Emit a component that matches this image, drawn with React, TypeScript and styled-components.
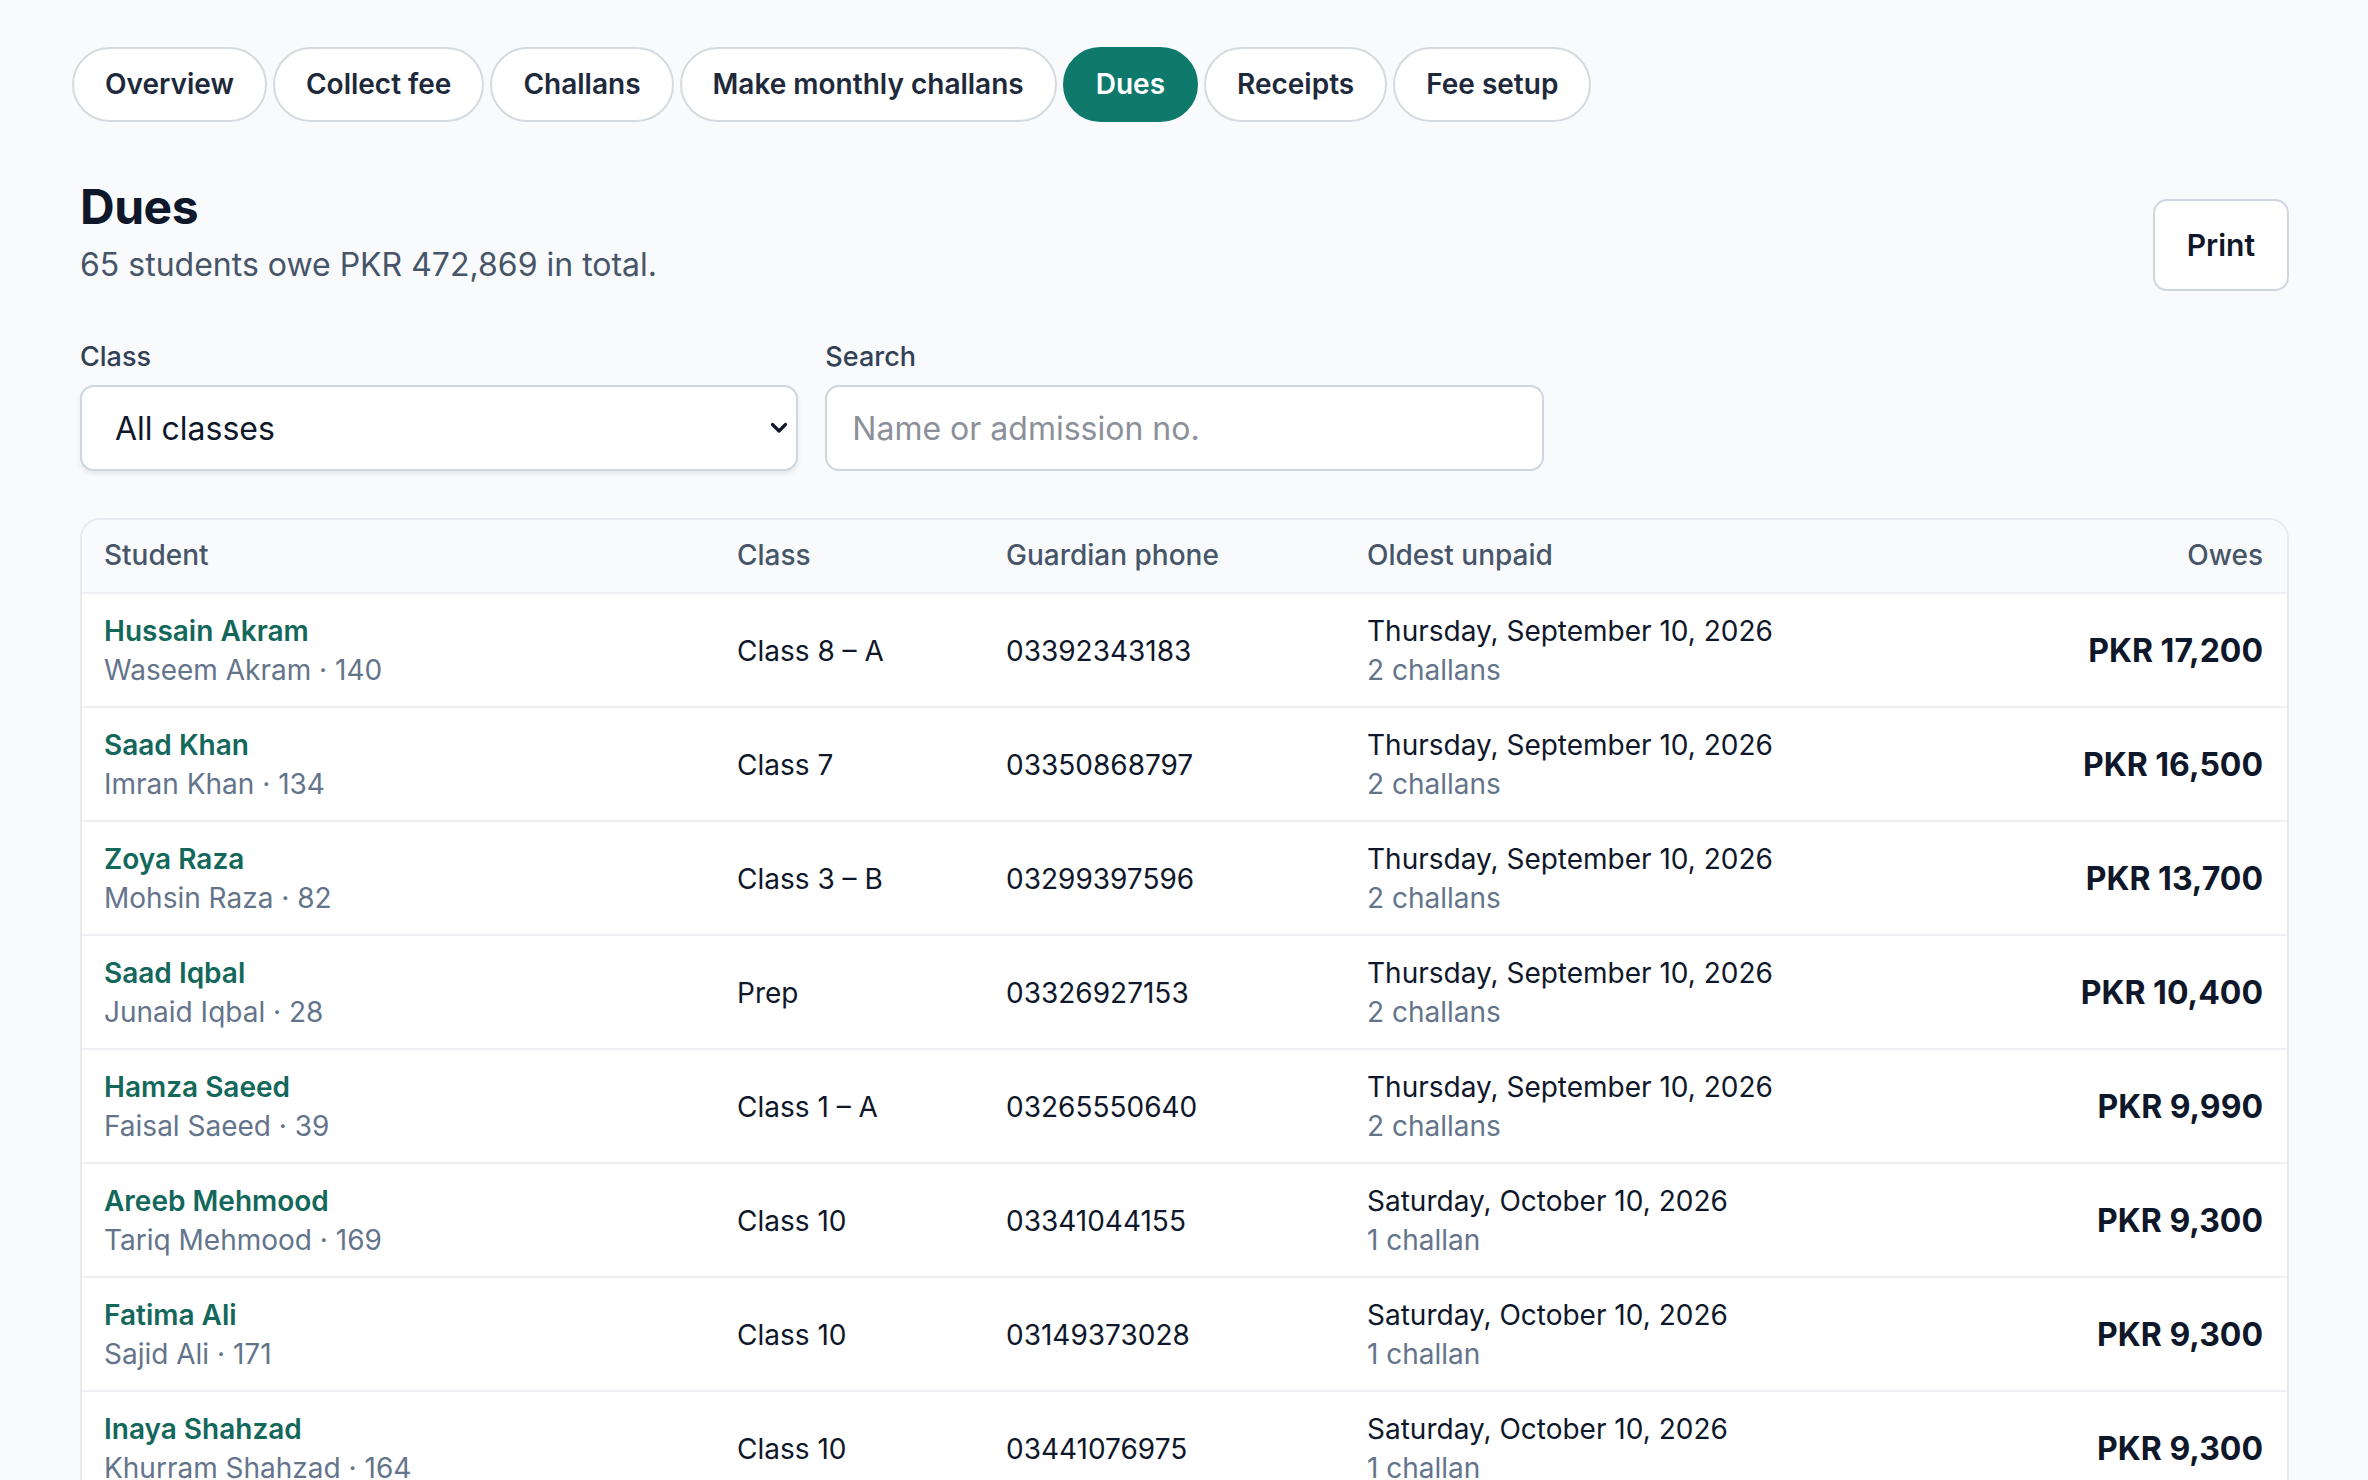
import styled, { createGlobalStyle } from "styled-components";

const GlobalStyle = createGlobalStyle`
  html, body {
    margin: 0;
    padding: 0;
    background: #f8fafc;
    overflow: hidden;
  }
  body {
    font-family: Inter, "Noto Sans", "Liberation Sans", sans-serif;
    color: #0f172a;
  }
  * {
    box-sizing: border-box;
  }
`;

const Page = styled.div`
  padding: 47px 79px 0 80px;
  min-height: 1480px;
`;

const Tabs = styled.nav`
  display: flex;
  gap: 6px;
  margin-left: -8px;
`;

const Tab = styled.button<{ $active?: boolean }>`
  font-family: inherit;
  font-size: 28px;
  font-weight: 600;
  line-height: 39px;
  padding: 16px 31px;
  border-radius: 999px;
  border: 2px solid ${(p) => (p.$active ? "#0f7a6c" : "#d5dae1")};
  background: ${(p) => (p.$active ? "#0f7a6c" : "#ffffff")};
  color: ${(p) => (p.$active ? "#ffffff" : "#1e293b")};
  cursor: pointer;
`;

const Header = styled.div`
  display: flex;
  align-items: flex-start;
  justify-content: space-between;
  margin-top: 56px;
`;

const Title = styled.h1`
  margin: 0;
  font-size: 48px;
  line-height: 58px;
  font-weight: 700;
  color: #0f172a;
  letter-spacing: -0.5px;
`;

const Subtitle = styled.p`
  margin: 9px 0 0;
  font-size: 32px;
  line-height: 39px;
  color: #475569;
`;

const PrintButton = styled.button`
  margin-top: 21px;
  font-family: inherit;
  font-size: 30px;
  font-weight: 600;
  line-height: 40px;
  padding: 24px 32px;
  border: 2px solid #cfd6df;
  border-radius: 14px;
  background: #ffffff;
  color: #0f172a;
  cursor: pointer;
`;

const Filters = styled.div`
  display: grid;
  grid-template-columns: repeat(3, 1fr);
  gap: 27px;
  margin-top: 48px;
`;

const Field = styled.label`
  display: flex;
  flex-direction: column;
  gap: 10px;
`;

const FieldLabel = styled.span`
  font-size: 27px;
  line-height: 36px;
  font-weight: 500;
  color: #334155;
`;

const SelectWrap = styled.div`
  position: relative;
`;

const Select = styled.select`
  appearance: none;
  width: 100%;
  height: 86px;
  font-family: inherit;
  font-size: 32px;
  color: #0f172a;
  padding: 0 60px 0 33px;
  border: 2px solid #cfd6df;
  border-radius: 14px;
  background: #ffffff;
  box-shadow: 0 3px 5px rgba(15, 23, 42, 0.08);
`;

const Chevron = styled.svg`
  position: absolute;
  right: 10px;
  top: 50%;
  transform: translateY(-50%);
  pointer-events: none;
`;

const Input = styled.input`
  width: 100%;
  height: 86px;
  font-family: inherit;
  font-size: 32px;
  color: #0f172a;
  padding: 0 25px;
  border: 2px solid #cfd6df;
  border-radius: 14px;
  background: #ffffff;
  &::placeholder {
    color: #8b9099;
  }
`;

const Card = styled.div`
  margin-top: 47px;
  background: #ffffff;
  border: 2px solid #e6e9ee;
  border-radius: 20px;
  overflow: hidden;
`;

const Table = styled.table`
  width: 100%;
  border-collapse: collapse;
  table-layout: fixed;
`;

const Th = styled.th<{ $right?: boolean }>`
  text-align: ${(p) => (p.$right ? "right" : "left")};
  font-size: 28px;
  font-weight: 500;
  line-height: 39px;
  color: #475569;
  padding: 16px 24px 17px 22px;
  background: #f8fafc;
  border-bottom: 2px solid #eef0f3;
`;

const Td = styled.td<{ $right?: boolean }>`
  text-align: ${(p) => (p.$right ? "right" : "left")};
  font-size: 28px;
  line-height: 39px;
  color: #0f172a;
  padding: 18px 24px 16px 22px;
  border-bottom: 2px solid #eef0f3;
  vertical-align: middle;
  white-space: nowrap;
`;

const Name = styled.a`
  display: block;
  font-weight: 600;
  color: #13685b;
  text-decoration: none;
`;

const Sub = styled.div`
  color: #64748b;
`;

const Amount = styled.span`
  font-size: 32px;
  font-weight: 700;
  color: #0f172a;
`;

const tabs = [
  "Overview",
  "Collect fee",
  "Challans",
  "Make monthly challans",
  "Dues",
  "Receipts",
  "Fee setup",
];

const rows = [
  ["Hussain Akram", "Waseem Akram · 140", "Class 8 – A", "03392343183", "Thursday, September 10, 2026", "2 challans", "PKR 17,200"],
  ["Saad Khan", "Imran Khan · 134", "Class 7", "03350868797", "Thursday, September 10, 2026", "2 challans", "PKR 16,500"],
  ["Zoya Raza", "Mohsin Raza · 82", "Class 3 – B", "03299397596", "Thursday, September 10, 2026", "2 challans", "PKR 13,700"],
  ["Saad Iqbal", "Junaid Iqbal · 28", "Prep", "03326927153", "Thursday, September 10, 2026", "2 challans", "PKR 10,400"],
  ["Hamza Saeed", "Faisal Saeed · 39", "Class 1 – A", "03265550640", "Thursday, September 10, 2026", "2 challans", "PKR 9,990"],
  ["Areeb Mehmood", "Tariq Mehmood · 169", "Class 10", "03341044155", "Saturday, October 10, 2026", "1 challan", "PKR 9,300"],
  ["Fatima Ali", "Sajid Ali · 171", "Class 10", "03149373028", "Saturday, October 10, 2026", "1 challan", "PKR 9,300"],
  ["Inaya Shahzad", "Khurram Shahzad · 164", "Class 10", "03441076975", "Saturday, October 10, 2026", "1 challan", "PKR 9,300"],
];

const App = () => {
  return (
    <Page>
      <GlobalStyle />
      <Tabs>
        {tabs.map((t) => (
          <Tab key={t} $active={t === "Dues"}>
            {t}
          </Tab>
        ))}
      </Tabs>

      <Header>
        <div>
          <Title>Dues</Title>
          <Subtitle>65 students owe PKR 472,869 in total.</Subtitle>
        </div>
        <PrintButton>Print</PrintButton>
      </Header>

      <Filters>
        <Field>
          <FieldLabel>Class</FieldLabel>
          <SelectWrap>
            <Select defaultValue="all">
              <option value="all">All classes</option>
            </Select>
            <Chevron width="18" height="12" viewBox="0 0 18 12">
              <path d="M2.5 2.5 L9 9 L15.5 2.5" fill="none" stroke="#111827" strokeWidth="3.2" strokeLinecap="round" strokeLinejoin="round" />
            </Chevron>
          </SelectWrap>
        </Field>
        <Field>
          <FieldLabel>Search</FieldLabel>
          <Input placeholder="Name or admission no." />
        </Field>
      </Filters>

      <Card>
        <Table>
          <colgroup>
            <col style={{ width: 633 }} />
            <col style={{ width: 269 }} />
            <col style={{ width: 361 }} />
            <col />
            <col style={{ width: 400 }} />
          </colgroup>
          <thead>
            <tr>
              <Th>Student</Th>
              <Th>Class</Th>
              <Th>Guardian phone</Th>
              <Th>Oldest unpaid</Th>
              <Th $right>Owes</Th>
            </tr>
          </thead>
          <tbody>
            {rows.map((r, i) => (
              <tr key={i}>
                <Td>
                  <Name href="#">{r[0]}</Name>
                  <Sub>{r[1]}</Sub>
                </Td>
                <Td>{r[2]}</Td>
                <Td>{r[3]}</Td>
                <Td>
                  <div>{r[4]}</div>
                  <Sub>{r[5]}</Sub>
                </Td>
                <Td $right>
                  <Amount>{r[6]}</Amount>
                </Td>
              </tr>
            ))}
          </tbody>
        </Table>
      </Card>
    </Page>
  );
};

export default App;
